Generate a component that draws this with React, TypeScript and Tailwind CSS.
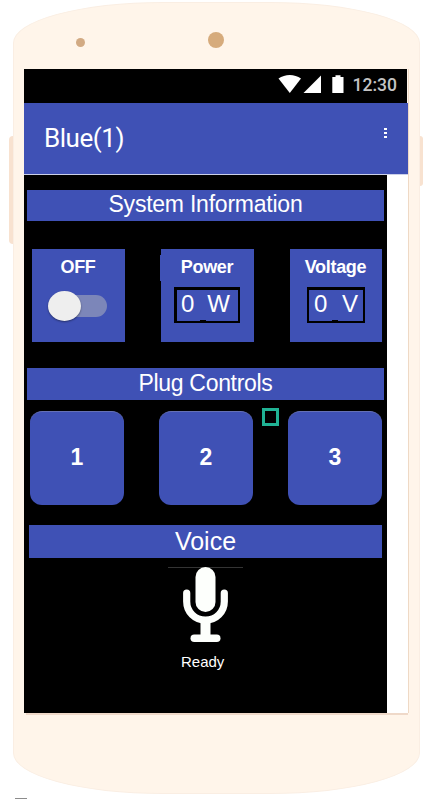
import React from "react";

const ARIAL = "font-['Liberation_Sans',Arial,sans-serif]";
const ROBOTO = "font-['Roboto',sans-serif]";

function StatusBar() {
  return (
    <div className="flex h-[34px] w-[383px] bg-black">
      <svg className="h-[34px] w-[383px]" viewBox="0 0 383 34">
        <path d="M254.500 9.500C261 4.800 270.500 4.800 277 9.500L265.800 24Z" fill="#fff" />
        <path d="M297 6.500V24H279.500Z" fill="#fff" />
        <path d="M308.300 8H311.500V6.300H316.500V8H319.500V24H308.300Z" fill="#fff" />
        <text x="328.500" y="21.500" className={ROBOTO} fontSize="17.500" fontWeight="500" fill="#c4c4c4" textLength="44.500" lengthAdjust="spacingAndGlyphs">12:30</text>
      </svg>
    </div>
  );
}

function TitleBar() {
  return (
    <div className={`flex h-[71px] items-center justify-between bg-[#3f51b5] pl-5 pr-[21px] text-white ${ROBOTO}`}>
      <h1 className="text-[26px] leading-[31px] tracking-[-0.45px]">Blue(1)</h1>
      <div className="mb-[11px] flex flex-col gap-[2px]">
        <i className="h-[2px] w-[3px] bg-white" />
        <i className="h-[2px] w-[3px] bg-white" />
        <i className="h-[2px] w-[3px] bg-white" />
      </div>
    </div>
  );
}

function Card({ title, className, children }: { title: string; className: string; children: React.ReactNode }) {
  return (
    <div className={`flex h-[93px] flex-col items-center bg-[#3f51b5] pt-2 ${className}`}>
      <div className="mr-px h-[30px] text-[18px] font-bold leading-5 tracking-[-0.3px]">{title}</div>
      {children}
    </div>
  );
}

function Reading({ unit, className }: { unit: string; className: string }) {
  return (
    <div className={`relative flex h-9 justify-between border-2 border-t-[3px] border-black text-[24px] leading-[27px] ${className}`}>
      <span>0</span>
      <span>{unit}</span>
      <i className="absolute bottom-0 left-[23px] h-px w-[6px] bg-black" />
    </div>
  );
}

function PlugButton({ label }: { label: string }) {
  return (
    <button className="h-[94px] w-[94px] rounded-xl border-t border-[#6570b5] bg-[#3f51b5] pb-[2px] text-[23px] font-bold text-white">
      {label}
    </button>
  );
}

export default function App() {
  return (
    <div className={`relative h-[799px] w-[432px] overflow-hidden bg-white ${ARIAL}`}>
      <div className="flex h-full items-start pl-[9px] pt-[2px]">
        <div className="mt-[134px] h-[108px] w-1 rounded-l-sm bg-[#f8e2d0]" />
        <div className="h-[792px] w-[407px] rounded-[150px/41px] border border-[#faeee3] bg-[#fff5ea] pl-[10px]">
          <div className="flex h-[66px] items-start">
            <i className="ml-[52px] mt-[35px] h-[9px] w-[9px] rounded-full bg-[#d2aa83]" />
            <i className="ml-[123px] mt-[29px] h-[16px] w-[16px] rounded-full bg-[#d6ab7c]" />
          </div>
          <div className="w-[385px] border-r border-[#efd9c5]">
            <StatusBar />
            <TitleBar />
            <div className="h-px bg-[#cbd0e8]" />
            <div className="flex h-[538px] bg-white">
              <main className="w-[363px] bg-black text-white">
                <div className="ml-[3px] pt-[15px]">
                  <h2 className="h-[31px] w-[357px] bg-[#3f51b5] text-center text-[23px] leading-[28px] tracking-[-0.23px]">System Information</h2>
                </div>
                <div className="ml-2 mt-7 flex">
                  <Card title="OFF" className="w-[93px]">
                    <div className="relative mr-[2px] mt-[3px] flex h-8 w-[59px] items-center">
                      <i className="ml-4 h-[22px] w-[43px] rounded-full bg-[#7c86b9]" />
                      <i className="absolute left-0 top-[1px] h-[30px] w-[33px] rounded-[50%] bg-[#eeeeee] shadow-[0_1px_2px_rgba(0,0,0,0.4)]" />
                    </div>
                  </Card>
                  <Card title="Power" className="relative ml-9 w-[93px]">
                    <i className="absolute left-[-1px] top-[6px] h-[26px] w-px bg-[#3f51b5]" />
                    <Reading unit="W" className="mr-[1px] w-[66px] border-l-[3px] pl-1 pr-2" />
                  </Card>
                  <Card title="Voltage" className="ml-9 w-[92px]">
                    <Reading unit="V" className="w-[58px] pl-[5px] pr-[5px]" />
                  </Card>
                </div>
                <h2 className="ml-[3px] mt-[26px] h-8 w-[357px] bg-[#3f51b5] text-center text-[23px] leading-[30px] tracking-[-0.3px]">Plug Controls</h2>
                <div className="relative ml-[6px] mt-[11px] flex gap-[35px]">
                  <PlugButton label="1" />
                  <PlugButton label="2" />
                  <PlugButton label="3" />
                  <i className="absolute left-[232px] top-[-3px] h-[18px] w-[17px] border-[3px] border-[#20b294]" />
                </div>
                <h2 className="ml-[5px] mt-5 h-[33px] w-[353px] bg-[#3f51b5] text-center text-[25px] leading-[33px]">Voice</h2>
                <svg className="ml-[144px] mt-[9px] h-[76px] w-[75px]" viewBox="0 0 75 76">
                  <path d="M0 0.500H75" stroke="#343434" />
                  <rect x="27.500" y="0" width="20" height="45" rx="10" fill="#fdfffc" />
                  <path d="M18.700 26V34.500C18.700 45 27 53.200 37.500 53.200S56.300 45 56.300 34.500V26" fill="none" stroke="#fdfffc" strokeWidth="7.200" strokeLinecap="round" />
                  <path d="M37.500 54V70" stroke="#fdfffc" strokeWidth="10" />
                  <rect x="22.500" y="67.500" width="30" height="7.500" rx="3.750" fill="#fdfffc" />
                </svg>
                <p className="ml-[157px] mt-[9px] text-[15px] leading-[20px]">Ready</p>
              </main>
            </div>
          </div>
          <div className="ml-[2px] h-[2px] w-[382px] bg-[#efd9c9]" />
        </div>
        <div className="mt-[134px] h-[50px] w-[3px] rounded-r-sm bg-[#f8e2d0]" />
      </div>
      <i className="absolute bottom-0 left-[15px] h-px w-3 bg-[#8c8c8c]" />
    </div>
  );
}
